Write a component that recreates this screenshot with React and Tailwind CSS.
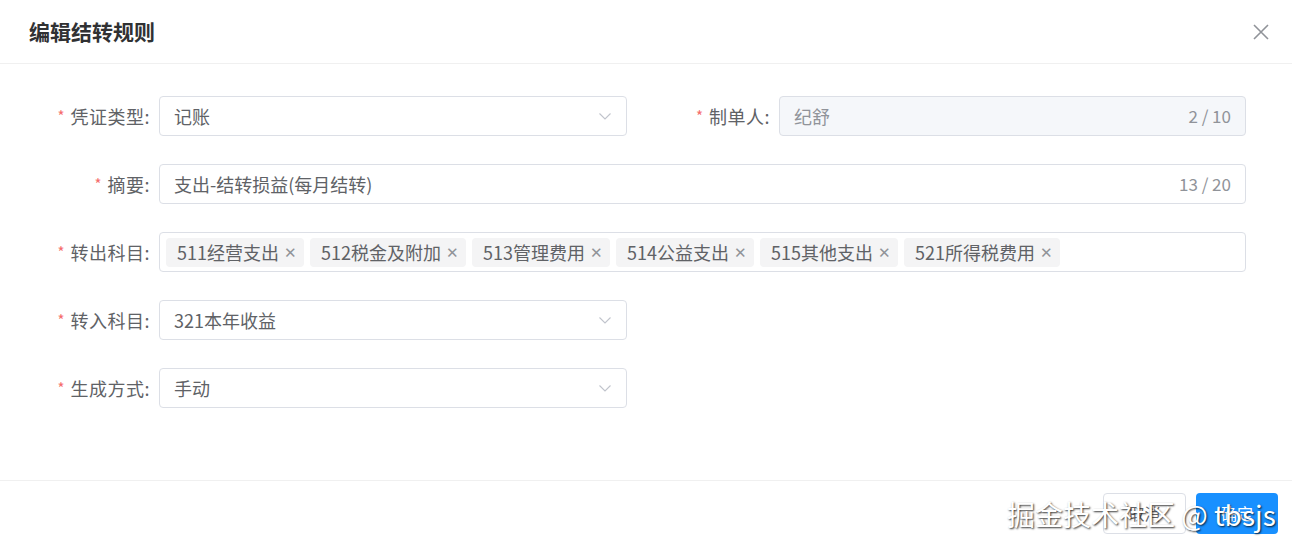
import React from "react";

const font = { fontFamily: '"Noto Sans CJK SC", "Noto Sans", sans-serif' };

const Chevron = () => (
  <svg width="14" height="14" viewBox="0 0 14 14" fill="none" className="text-[#c0c4cc]">
    <path d="M1.5 4.5 L7 10 L12.5 4.5" stroke="currentColor" strokeWidth="1.1" />
  </svg>
);

const Label = ({ text, className = "w-[159px]" }) => (
  <div className={`${className} shrink-0 flex items-center justify-end pr-[9px] text-[18px] text-[#606266]`}>
    <span className="text-[#f56c6c] text-[15px] mr-[6px]">*</span>
    <span className="tracking-[0.5px]">{text}:</span>
  </div>
);

const Select = ({ value, className = "w-[468px]" }) => (
  <div className={`${className} h-[40px] border border-[#dcdfe6] rounded-[4px] flex items-center justify-between pl-[14px] pr-[14px] text-[18px] text-[#606266] bg-white`}>
    <span>{value}</span>
    <Chevron />
  </div>
);

const Tag = ({ text }) => (
  <div className="h-[29px] flex items-center bg-[#f4f4f5] rounded-[4px] pl-[11px] pr-[7px] text-[18px] text-[#606266]">
    <span>{text}</span>
    <span className="ml-[5px] text-[#909399] text-[15px]">✕</span>
  </div>
);

export default function App() {
  const tags = ["511经营支出", "512税金及附加", "513管理费用", "514公益支出", "515其他支出", "521所得税费用"];
  return (
    <div className="w-[1292px] h-[545px] bg-white relative flex flex-col" style={font}>
      {/* header */}
      <div className="h-[64px] shrink-0 flex items-center justify-between pl-[29px] pr-[22px] border-b border-[#f0f0f0]">
        <div className="text-[21px] font-bold text-[#303133]">编辑结转规则</div>
        <svg width="18" height="18" viewBox="0 0 18 18" className="text-[#909399]">
          <path d="M2 2 L16 16 M16 2 L2 16" stroke="currentColor" strokeWidth="1.6" />
        </svg>
      </div>

      {/* body */}
      <div className="flex-1 flex flex-col gap-[28px] pt-[32px] pr-[46px]">
        <div className="flex items-center">
          <Label text="凭证类型" />
          <Select value="记账" />
          <Label text="制单人" className="w-[152px]" />
          <div className="flex-1 h-[40px] border border-[#dcdfe6] rounded-[4px] bg-[#f5f7fa] flex items-center justify-between pl-[14px] pr-[14px] text-[18px]">
            <span className="text-[#909399]">纪舒</span>
            <span className="text-[17px] text-[#909399]">2 / 10</span>
          </div>
        </div>
        <div className="flex items-center">
          <Label text="摘要" />
          <div className="flex-1 h-[40px] border border-[#dcdfe6] rounded-[4px] flex items-center justify-between pl-[14px] pr-[14px] text-[18px]">
            <span className="text-[#606266]">支出-结转损益(每月结转)</span>
            <span className="text-[17px] text-[#909399]">13 / 20</span>
          </div>
        </div>
        <div className="flex items-center">
          <Label text="转出科目" />
          <div className="flex-1 h-[40px] border border-[#dcdfe6] rounded-[4px] flex items-center gap-[6px] pl-[6px]">
            {tags.map((t) => (
              <Tag key={t} text={t} />
            ))}
          </div>
        </div>
        <div className="flex items-center">
          <Label text="转入科目" />
          <Select value="321本年收益" />
        </div>
        <div className="flex items-center">
          <Label text="生成方式" />
          <Select value="手动" />
        </div>
      </div>

      {/* footer */}
      <div className="h-[65px] shrink-0 border-t border-[#f0f0f0] flex items-center justify-end gap-[10px] pr-[14px]">
        <button className="w-[83px] h-[41px] border border-[#dcdfe6] rounded-[4px] bg-white text-[16px] text-[#606266]">取消</button>
        <button className="w-[82px] h-[41px] rounded-[4px] bg-[#1890ff] text-[16px] text-white">确定</button>
      </div>

      {/* watermark */}
      <div className="absolute left-[1007px] top-[493px] text-[28px] text-white whitespace-nowrap [text-shadow:1px_1px_2px_rgba(0,0,0,0.8)]">
        掘金技术社区 @ tbsjs
      </div>
    </div>
  );
}
